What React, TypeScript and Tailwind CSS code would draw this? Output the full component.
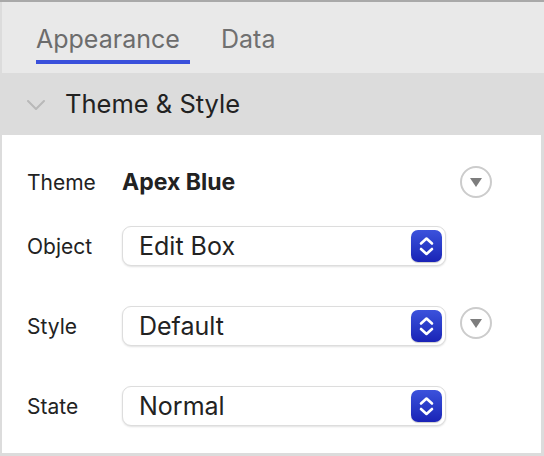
import React from "react";

const font = { fontFamily: 'Inter, "Liberation Sans", sans-serif' };

function Stepper() {
  return (
    <div className="w-[31px] h-[32px] rounded-[7px] bg-gradient-to-b from-[#3c52dc] to-[#1a22b6] flex items-center justify-center shadow-[0_1px_1px_rgba(0,0,0,0.2)]">
      <svg width="31" height="32" viewBox="0 0 31 32" fill="none">
        <path d="M10 13.5 L15.5 8.5 L21 13.5" stroke="white" strokeWidth="2.6" strokeLinecap="round" strokeLinejoin="round" />
        <path d="M10 19 L15.5 24 L21 19" stroke="white" strokeWidth="2.6" strokeLinecap="round" strokeLinejoin="round" />
      </svg>
    </div>
  );
}

function Select({ value }: { value: string }) {
  return (
    <div className="w-[324px] h-[40px] shrink-0 rounded-[9px] bg-white border border-[#dddddd] shadow-[0_1px_2px_rgba(0,0,0,0.12)] flex items-center justify-between pl-[16px] pr-[3px]">
      <span className="text-[25px] text-[#222222] leading-none">{value}</span>
      <Stepper />
    </div>
  );
}

function CircleBtn({ extra = "" }: { extra?: string }) {
  return (
    <div className={"ml-[14px] w-[32px] h-[32px] shrink-0 rounded-full border-2 border-[#cccccc] bg-white flex items-center justify-center " + extra}>
      <svg width="14" height="12" viewBox="0 0 14 12">
        <path d="M1 2 L13 2 L7 11 Z" fill="#7d7d7d" />
      </svg>
    </div>
  );
}

function Label({ children }: { children: React.ReactNode }) {
  return <div className="w-[120px] shrink-0 pl-[25px] text-[21px] text-[#222222] leading-none">{children}</div>;
}

export default function App() {
  return (
    <div style={font} className="w-[544px] h-[456px] bg-white border-t-2 border-[#a9a9a9] flex flex-col overflow-hidden">
      <div className="h-[71px] bg-[#e9e9e9] border-l-2 border-[#dcdcdc] flex items-start pl-[34px] pt-[22px] gap-[31px]">
        <div className="flex flex-col w-[154px]">
          <span className="text-[25px] text-[#6c6c6c] leading-[30px]">Appearance</span>
          <div className="mt-[6px] h-[4px] bg-[#3a50db]" />
        </div>
        <span className="text-[25px] text-[#707070] leading-[30px]">Data</span>
      </div>
      <div className="h-[62px] bg-[#dcdcdc] flex items-center pl-[27px]">
        <svg width="18" height="10" viewBox="0 0 18 10" fill="none" className="mt-[1px]">
          <path d="M1 1 L9 9 L17 1" stroke="#b9b9b9" strokeWidth="2" strokeLinecap="round" strokeLinejoin="round" />
        </svg>
        <span className="ml-[20px] text-[25.5px] text-[#222222] leading-none">Theme &amp; Style</span>
      </div>
      <div className="flex-1 bg-white border-l-2 border-r-[3px] border-b-[3px] border-[#dcdcdc] flex flex-col pt-[31px]">
        <div className="flex items-center h-[32px]">
          <Label>Theme</Label>
          <div className="w-[324px] shrink-0 text-[23px] font-bold text-[#222222] leading-none">Apex Blue</div>
          <CircleBtn />
        </div>
        <div className="flex items-center mt-[28px]">
          <Label>Object</Label>
          <Select value="Edit Box" />
        </div>
        <div className="flex items-center mt-[40px]">
          <Label>Style</Label>
          <Select value="Default" />
          <CircleBtn extra="mb-[6px]" />
        </div>
        <div className="flex items-center mt-[40px]">
          <Label>State</Label>
          <Select value="Normal" />
        </div>
      </div>
    </div>
  );
}
